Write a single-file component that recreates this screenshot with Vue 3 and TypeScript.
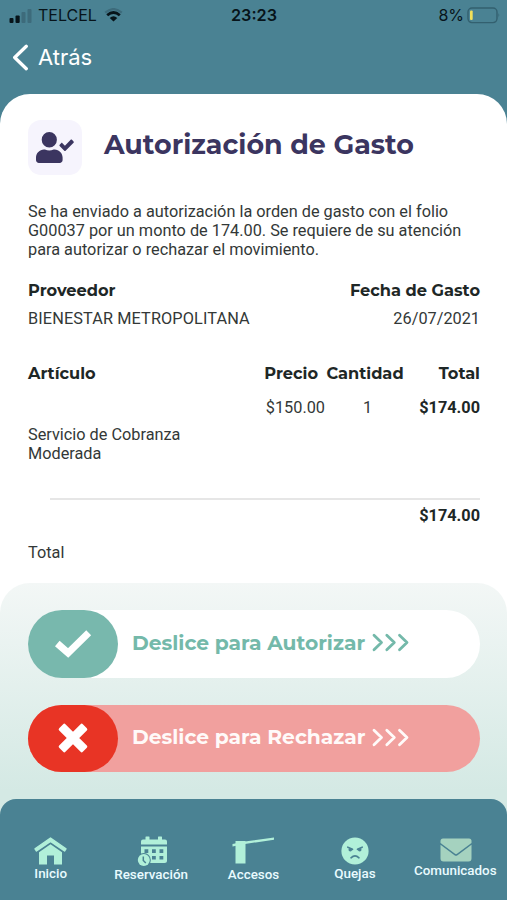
<script setup lang="ts">
interface Item {
  name: string
  price: string
  quantity: number
  total: string
}

interface Tab {
  id: string
  label: string
}

const item: Item = {
  name: 'Servicio de Cobranza Moderada',
  price: '$150.00',
  quantity: 1,
  total: '$174.00',
}

const tabs: Tab[] = [
  { id: 'home', label: 'Inicio' },
  { id: 'booking', label: 'Reservación' },
  { id: 'access', label: 'Accesos' },
  { id: 'complaints', label: 'Quejas' },
  { id: 'messages', label: 'Comunicados' },
]
</script>

<template>
  <div class="screen">
    <header class="status">
      <div class="carrier">
        <svg width="23" height="15" viewBox="0 0 23 15">
          <rect x="0.5" y="10" width="4" height="5" rx="1" fill="#07141a" />
          <rect x="6.5" y="7.5" width="4.2" height="7.5" rx="1" fill="#07141a" />
          <rect x="12.5" y="4" width="4" height="11" rx="1" fill="#3d6b7b" />
          <rect x="18.5" y="1" width="4" height="14" rx="1" fill="#3d6b7b" />
        </svg>
        <span class="operator">TELCEL</span>
        <svg class="wifi" width="19" height="14" viewBox="0 0 19 14" fill="none">
          <path d="M1.2 4.7Q9.5-2.5 17.8 4.7" stroke="#3d6b7b" stroke-width="2.2" />
          <path d="M3.2 7.3Q9.5 1.7 15.8 7.3" stroke="#07141a" stroke-width="2.8" />
          <path d="M5.7 9.9Q9.5 6.6 13.3 9.9L9.5 13.6Z" fill="#07141a" />
        </svg>
      </div>
      <span class="clock">23:23</span>
      <div class="power">
        <span>8%</span>
        <svg width="34" height="17" viewBox="0 0 34 17">
          <rect x="1" y="1" width="29" height="14.6" rx="4" fill="none" stroke="#33606f" stroke-width="1.4" />
          <rect x="3" y="3.5" width="2.7" height="9.5" rx="1" fill="#f1e05a" />
          <path d="M31.5 6Q33.3 8.3 31.5 10.6Z" fill="#33606f" />
        </svg>
      </div>
    </header>

    <nav class="back">
      <svg width="17" height="27" viewBox="0 0 17 27" fill="none">
        <path d="M14.3 2.3L2.7 13.5L14.3 24.7" stroke="#fff" stroke-width="3.3" stroke-linecap="round" stroke-linejoin="round" />
      </svg>
      <span>Atrás</span>
    </nav>

    <main class="sheet">
      <div class="title-row">
        <div class="badge">
          <svg width="38" height="31" viewBox="0 0 640 512" preserveAspectRatio="none" fill="#3b3560">
            <path d="M224 256A128 128 0 1 0 224 0a128 128 0 1 0 0 256zm89.600 32h-16.700a174 174 0 0 1-145.800 0h-16.700C60.200 288 0 348.200 0 422.400V464c0 26.500 21.500 48 48 48h352c26.500 0 48-21.500 48-48v-41.600C448 348.200 387.800 288 313.600 288z" />
            <path d="M633 156l-27-27c-6-6-16-6-22 0L487 226l-42-42c-6-6-16-6-22 0l-25 26c-6 6-6 16 0 22l78 78c6 6 16 6 22 0l135-132c6-6 6-16 0-22z" />
          </svg>
        </div>
        <h1>Autorización de Gasto</h1>
      </div>

      <p class="message">
        Se ha enviado a autorización la orden de gasto con el folio G00037 por un monto de 174.00. Se requiere de su atención para autorizar o rechazar el movimiento.
      </p>

      <section class="meta">
        <div>
          <h2 class="provider">Proveedor</h2>
          <p class="provider-value">BIENESTAR METROPOLITANA</p>
        </div>
        <div class="right">
          <h2 class="date">Fecha de Gasto</h2>
          <p class="date-value">26/07/2021</p>
        </div>
      </section>

      <section class="items">
        <div class="row head">
          <h2 class="article">Artículo</h2>
          <h2 class="price">Precio</h2>
          <h2 class="quantity">Cantidad</h2>
          <h2 class="total">Total</h2>
        </div>
        <div class="row">
          <span class="name">{{ item.name }}</span>
          <span class="price-value">{{ item.price }}</span>
          <span class="center">{{ item.quantity }}</span>
          <strong>{{ item.total }}</strong>
        </div>
      </section>

      <section class="summary">
        <strong>{{ item.total }}</strong>
        <span>Total</span>
      </section>

      <section class="actions">
        <button class="slider accept" type="button">
          <span class="knob">
            <svg width="38" height="29" viewBox="0 0 38 29" fill="none">
              <path d="M3.3 14.5L14.1 24L34.700 3.800" stroke="#fff" stroke-width="7" />
            </svg>
          </span>
          <span class="caption">Deslice para Autorizar</span>
          <svg class="arrows" width="38" height="19" viewBox="0 0 38 19" fill="none" stroke="currentColor" stroke-width="2.8" stroke-linecap="round" stroke-linejoin="round">
            <path d="M2 2.200l7.500 7.300L2 16.800M14.800 2.200l7.500 7.300-7.500 7.300M27.500 2.200L35 9.500l-7.500 7.300" />
          </svg>
        </button>
        <button class="slider reject" type="button">
          <span class="knob">
            <svg width="34" height="34" viewBox="0 0 34 34" fill="none">
              <path d="M4.300 8.300L8.300 4.300L29.700 25.700L25.700 29.700ZM25.700 4.300L29.700 8.300L8.300 29.700L4.300 25.700Z" fill="#fff" stroke="#fff" stroke-width="3.200" stroke-linejoin="round" />
            </svg>
          </span>
          <span class="caption">Deslice para Rechazar</span>
          <svg class="arrows" width="38" height="19" viewBox="0 0 38 19" fill="none" stroke="currentColor" stroke-width="2.8" stroke-linecap="round" stroke-linejoin="round">
            <path d="M2 2.200l7.500 7.300L2 16.800M14.800 2.200l7.500 7.300-7.500 7.300M27.500 2.200L35 9.500l-7.500 7.300" />
          </svg>
        </button>
      </section>
    </main>

    <footer class="tabs">
      <a v-for="tab in tabs" :key="tab.id" class="tab" :class="tab.id">
        <svg v-if="tab.id === 'home'" width="33" height="28" viewBox="0 0 33 28">
          <path d="M16.500 1L32 11.800L30.500 14L16.500 4.400L2.500 14L1 11.800Z" fill="#b1f0d9" stroke="#b1f0d9" stroke-width="1.400" stroke-linejoin="round" />
          <path d="M5 15.200L16.500 7.200L28 15.200V27.500H20V18.500H13V27.500H5Z" fill="#b1f0d9" />
        </svg>
        <svg v-else-if="tab.id === 'booking'" width="31" height="31" viewBox="0 0 31 31">
          <path d="M4 8.500V5.500Q4 3.500 6 3.500H8.500V1Q8.500 0.500 9 0.500H12Q12.500 0.500 12.500 1V3.500H21V1Q21 0.500 21.500 0.500H24.500Q25 0.500 25 1V3.500H28Q30 3.500 30 5.500V8.500Z" fill="#b1f0d9" />
          <path d="M4 10.500H30V24.500Q30 27 27.500 27H4Z" fill="#b1f0d9" />
          <path d="M7.500 13.300h3.800v3.600h-3.800zM15 13.300h3.800v3.600h-3.800zM22.500 13.300h3.800v3.600h-3.800zM15 20h3.800v3.600h-3.800zM22.500 20h3.800v3.600h-3.800z" fill="#4a8293" />
          <circle cx="6.800" cy="24" r="7" fill="#4a8293" />
          <circle cx="6.800" cy="24" r="6" fill="#b1f0d9" />
          <path d="M6.300 20.500V24.500L8.800 27" fill="none" stroke="#4a8293" stroke-width="1.500" />
        </svg>
        <svg v-else-if="tab.id === 'access'" width="42" height="27" viewBox="0 0 42 27">
          <path d="M3.500 4H13.500V26.500H3.500Z" fill="#b1f0d9" />
          <path d="M0.500 9.500L13 7L42 2.700V0.400L13 4.600L0.500 7Z" fill="#b1f0d9" />
        </svg>
        <svg v-else-if="tab.id === 'complaints'" width="28" height="28" viewBox="0 0 28 28">
          <circle cx="14" cy="14" r="13.600" fill="#b1f0d9" />
          <g fill="none" stroke="#4a8293" stroke-width="1.600" stroke-linecap="round">
            <path d="M6.800 10.200L11.500 12.300M21.200 10.200L16.500 12.300M10 20.800Q14 17 18 20.800" />
          </g>
          <circle cx="9.300" cy="12.800" r="1.800" fill="#4a8293" />
          <circle cx="18.700" cy="12.800" r="1.800" fill="#4a8293" />
        </svg>
        <svg v-else width="32" height="24" viewBox="0 0 32 24">
          <path d="M0.500 6.700L14.500 17.300Q16 18.300 17.500 17.300L31.500 6.700V20.500Q31.500 23.500 28.500 23.500H3.500Q0.500 23.500 0.500 20.500Z" fill="#a5d2bf" />
          <path d="M3 0.500H29Q31.500 0.500 31.500 3V5L17 15.800Q16 16.500 15 15.800L0.500 5V3Q0.500 0.500 3 0.500Z" fill="#a5d2bf" />
        </svg>
        <span>{{ tab.label }}</span>
      </a>
    </footer>
  </div>
</template>

<style>
body {
  margin: 0;
}
</style>

<style scoped>
.screen {
  width: 507px;
  height: 900px;
  display: flex;
  flex-direction: column;
  overflow: hidden;
  background: #4a8293;
  color: #333837;
  font: 16.3px/19px Roboto, sans-serif;
}

h1,
h2,
p {
  margin: 0;
}

.status {
  height: 30px;
  display: grid;
  grid-template-columns: 1fr auto 1fr;
  align-items: center;
  padding: 0 6px 0 9px;
  color: #07141a;
  font-family: Inter, sans-serif;
  font-size: 16px;
}

.carrier,
.power {
  display: flex;
  align-items: center;
}

.operator {
  margin-left: 6px;
}

.wifi {
  margin-left: 7px;
}

.clock {
  margin-left: -2px;
  font-size: 16.2px;
  font-weight: 600;
}

.power {
  justify-content: flex-end;
  gap: 3px;
}

.back {
  height: 64px;
  box-sizing: border-box;
  display: flex;
  align-items: flex-start;
  gap: 9px;
  padding: 14px 0 0 12px;
  color: #fff;
  font: 22px/27px Inter, sans-serif;
}

.sheet {
  flex: none;
  height: 725px;
  display: flex;
  flex-direction: column;
  border-radius: 30px 30px 0 0;
  background: #fff;
}

.title-row {
  display: flex;
  align-items: center;
  gap: 22px;
  margin: 26px 0 0 28px;
}

.badge {
  width: 54px;
  height: 55px;
  display: flex;
  align-items: center;
  justify-content: center;
  border-radius: 13px;
  background: #f6f4fd;
}

h1 {
  color: #3b3560;
  font: 700 26.9px/36px Montserrat, Inter, sans-serif;
  white-space: nowrap;
  padding-bottom: 5px;
}

h2 {
  color: #1e2726;
  font: 700 16.2px/20px Montserrat, Inter, sans-serif;
  white-space: nowrap;
}

.message {
  margin: 27px 28px 0;
}

.meta {
  display: flex;
  justify-content: space-between;
  margin: 21px 27px 0 28px;
}

.meta p {
  margin-top: 9px;
}

.meta .provider-value {
  letter-spacing: 0.11px;
}

.right {
  text-align: right;
}

.items {
  margin: 35px 27px 0 28px;
}

.row {
  display: grid;
  grid-template-columns: 170px 127px 85px 70px;
}

.head {
  margin-bottom: 15px;
}

.price,
.price-value {
  text-align: right;
}

.head .price {
  padding-right: 7px;
}

.center,
.quantity {
  text-align: center;
}

.head .quantity {
  margin-left: -5px;
}

.name {
  margin-top: 27px;
}

.total,
strong {
  text-align: right;
}

strong {
  color: #1e2726;
  font-weight: 700;
}

.summary {
  height: 85px;
  box-sizing: border-box;
  display: flex;
  flex-direction: column;
  margin: 35px 27px 0 28px;
}

.summary::before {
  content: '';
  flex: none;
  height: 2px;
  margin: 0 0 6px 22px;
  background: #e6e6e6;
}

.summary span {
  margin-top: 18px;
}

.actions {
  flex: 1;
  display: flex;
  flex-direction: column;
  gap: 27px;
  padding: 27px 27px 0 28px;
  border-radius: 30px 30px 0 0;
  background: linear-gradient(#f3f7f6, #d4e9e4 88%);
}

.slider {
  height: 67.5px;
  display: flex;
  align-items: center;
  padding: 0;
  border: 0;
  border-radius: 34px;
  font: 700 20.25px/26px Montserrat, Inter, sans-serif;
}

.accept {
  background: #fff;
  color: #74b9aa;
}

.reject {
  background: #f1a09e;
  color: #fffaf9;
}

.knob {
  width: 90px;
  height: 100%;
  display: flex;
  align-items: center;
  justify-content: center;
  border-radius: 34px;
  background: #78b8ad;
}

.reject .knob {
  background: #e83425;
}

.caption {
  width: 233px;
  margin-left: 14px;
  padding-bottom: 2px;
  text-align: left;
  white-space: nowrap;
}

.arrows {
  margin: 0 0 2px 7px;
}

.tabs {
  height: 101px;
  flex: none;
  box-sizing: border-box;
  display: grid;
  grid-template-columns: repeat(5, 1fr);
  align-items: start;
  margin-top: -20px;
  padding-top: 38px;
  border-radius: 16px 16px 0 0;
  background: #4a8293;
  color: #e9fbff;
  font-size: 13.4px;
  font-weight: 500;
  line-height: 16px;
}

.tab {
  display: flex;
  flex-direction: column;
  align-items: center;
}

.home span,
.complaints span,
.messages span {
  margin-top: 1px;
}

.booking {
  margin: -1px 2px 0 0;
}

.booking svg {
  margin-left: 3px;
}

.access span {
  margin-top: 3px;
}

.messages {
  margin: 1px 2px 0 0;
}

.messages svg {
  margin-left: 2px;
}
</style>
